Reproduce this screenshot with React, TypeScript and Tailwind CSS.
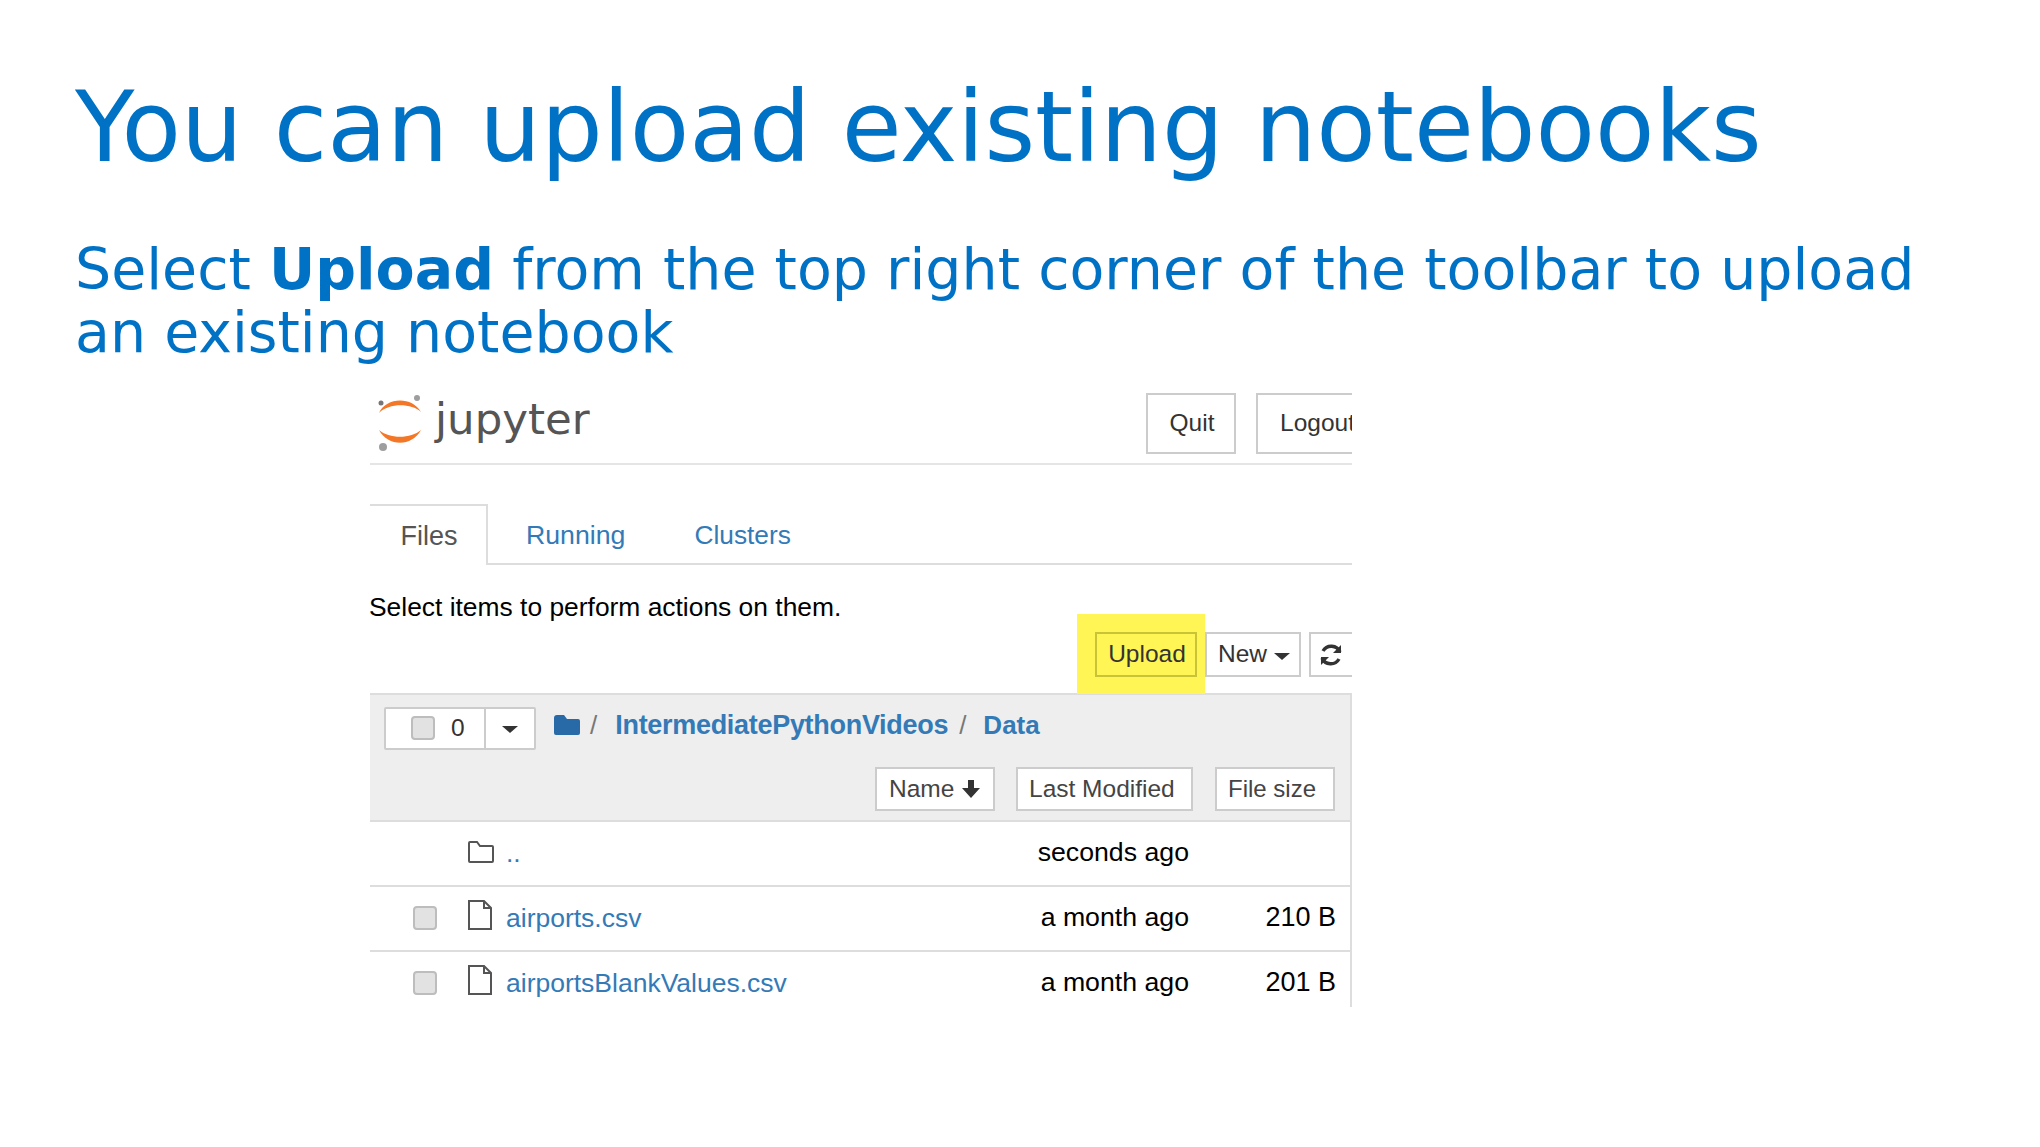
const sans = "font-['Liberation_Sans',Arial,sans-serif]";

function JupyterLogo() {
  return (
    <svg width="46" height="58" viewBox="0 0 46 58" className="shrink-0">
      <path d="M2 19 C9 3 35 2 44 18 C34 9 12 9 2 19 Z" fill="#f37726" />
      <path d="M2 36 C11 53 35 53 44 36 C34 45 12 45 2 36 Z" fill="#f37726" />
      <circle cx="40" cy="4" r="3" fill="#9e9e9e" />
      <circle cx="4" cy="9" r="2.5" fill="#767677" />
      <circle cx="6" cy="53" r="4" fill="#9e9e9e" />
    </svg>
  );
}

function Check() {
  return <span className="block w-[24px] h-[24px] rounded-[4px] border-2 border-[#bdbdbd] bg-[#e2e2e2]" />;
}

function HeaderBtn({ label, className }: { label: string; className: string }) {
  return (
    <div className={`h-[61px] border-2 border-[#ccc] flex items-center text-[24.5px] text-[#333] overflow-hidden ${className}`}>
      {label}
    </div>
  );
}

function SortBtn({ children, className }: { children: React.ReactNode; className: string }) {
  return (
    <div className={`h-[44px] bg-white border-2 border-[#ccc] flex items-center text-[#444] ${className}`}>
      {children}
    </div>
  );
}

function FileIcon() {
  return (
    <svg width="26" height="30" viewBox="0 0 26 30" fill="none" stroke="#555" strokeWidth="2">
      <path d="M2 1 H17 L24 8 V29 H2 Z M17 1 V8 H24" />
    </svg>
  );
}

function FileRow({ name, size }: { name: string; size: string }) {
  return (
    <div className="h-[65px] border-t-2 border-[#ddd] flex items-center">
      <div className="w-[54px] ml-[43px] shrink-0 -mt-[1px]"><Check /></div>
      <div className="w-[39px] -mt-[7px] shrink-0"><FileIcon /></div>
      <span className="text-[26.5px] text-[#337ab7]">{name}</span>
      <span className="ml-auto text-[26.7px] text-black text-right -mt-[2px]">a month ago</span>
      <span className="text-[27px] text-black w-[146px] text-right pr-[14px] ml-[15px] -mt-[2px]">{size}</span>
    </div>
  );
}

export default function App() {
  return (
    <div className="w-[2040px] h-[1147px] bg-white overflow-hidden font-['DejaVu_Sans',sans-serif] text-[#0072c6]">
      <div className="pl-[75px] pt-[68px]">
        <h1 className="text-[97.3px] leading-[120px] font-normal">You can upload existing notebooks</h1>
        <p className="mt-[50px] text-[57px] leading-[63px] w-[1850px]">
          Select <b className="font-bold">Upload</b> from the top right corner of the toolbar to upload an existing notebook
        </p>
      </div>

      <div className={`ml-[370px] mt-[28px] w-[982px] ${sans}`}>
        <div className="h-[71px] flex items-center border-b-2 border-[#e5e5e5] box-content">
          <div className="flex items-center ml-[7px] -mt-[10px]">
            <JupyterLogo />
            <span className="ml-[12px] text-[43.5px] leading-[50px] -mt-[8px] text-[#555] font-['DejaVu_Sans',sans-serif]">jupyter</span>
          </div>
          <div className="ml-auto flex gap-[20px] -mt-[9px] overflow-hidden">
            <HeaderBtn label="Quit" className="w-[90px] justify-center pl-[2px]" />
            <HeaderBtn label="Logout" className="w-[96px] pl-[22px] border-r-0" />
          </div>
        </div>

        <div className="mt-[39px] h-[59px] flex border-b-2 border-[#ddd] box-content">
          <div className="w-[118px] h-[61px] border-t-2 border-r-2 border-[#ddd] bg-white flex items-center justify-center text-[27px] text-[#555] pt-[2px] pl-[2px]">Files</div>
          <div className="flex items-center ml-[38px] text-[26.7px] text-[#337ab7] pt-[4px]">Running</div>
          <div className="flex items-center ml-[69px] text-[26.3px] text-[#337ab7] pt-[4px]">Clusters</div>
        </div>

        <div className="mt-[27px] -mb-[8px] leading-[30px] -ml-[1px] text-[26.4px] text-black">Select items to perform actions on them.</div>

        <div className="h-[79px] flex justify-end items-start">
          <div className="h-[80px] w-[128px] bg-[#fff555] pt-[18px] pl-[18px]">
            <div className="h-[45px] w-[102px] border-2 border-[#c9c437] flex items-center justify-center text-[24.5px] text-[#333] pl-[2px]">Upload</div>
          </div>
          <div className="h-[45px] w-[96px] mt-[18px] border-2 border-[#ccc] flex items-center pl-[11px] text-[24.5px] text-[#333]">
            New
            <span className="ml-[7px] mt-[3px] w-0 h-0 border-x-[8px] border-x-transparent border-t-[7px] border-t-[#333]" />
          </div>
          <div className="h-[45px] w-[43px] ml-[8px] mt-[18px] border-2 border-r-0 border-[#ccc] flex items-center pl-[8px]">
            <svg width="24" height="24" viewBox="0 0 24 24" fill="none" stroke="#333" strokeWidth="3.4">
              <path d="M21 9 A9.5 9.5 0 0 0 4 8 M3 15 A9.5 9.5 0 0 0 20 16" />
              <path d="M22 2 V10 H14 Z M2 22 V14 H10 Z" fill="#333" stroke="none" />
            </svg>
          </div>
        </div>

        <div className="h-[314px] overflow-hidden border-r-2 border-[#ddd]">
          <div className="h-[129px] bg-[#eee] border-t-2 border-b-2 border-[#ddd]">
            <div className="flex items-center pt-[12px] pl-[14px]">
              <div className="h-[43px] w-[152px] bg-white border-2 border-[#ccc] rounded-[2px] flex">
                <div className="w-[100px] border-r-2 border-[#ccc] flex items-center pl-[25px] -mt-[1px]">
                  <Check />
                  <span className="ml-[16px] text-[24.5px] text-[#333]">0</span>
                </div>
                <div className="flex-1 flex items-center justify-center">
                  <span className="w-0 h-0 border-x-[8px] border-x-transparent border-t-[7px] border-t-[#333] mt-[2px]" />
                </div>
              </div>
              <svg width="26" height="20" viewBox="0 0 26 20" className="ml-[18px] -mt-[8px]" fill="#286aa8">
                <path d="M0 3 Q0 0 3 0 H10 L13 4 H24 Q26 4 26 6 V18 Q26 20 24 20 H2 Q0 20 0 18 Z" />
              </svg>
              <span className="ml-[10px] -mt-[6px] text-[26px] text-[#777]">/</span>
              <span className="ml-[18px] -mt-[6px] text-[27px] text-[#337ab7] font-bold tracking-[-0.3px]">IntermediatePythonVideos</span>
              <span className="ml-[11px] -mt-[6px] text-[26px] text-[#777]">/</span>
              <span className="ml-[17px] -mt-[6px] text-[26px] text-[#337ab7] font-bold">Data</span>
            </div>
            <div className="flex justify-end mt-[17px] pr-[15px]">
              <SortBtn className="w-[120px] pl-[12px] gap-[6px] text-[24.5px]">
                Name
                <svg width="22" height="22" viewBox="0 0 22 22" fill="#333">
                  <path d="M8 2 H14 V10 H20 L11 20 L2 10 H8 Z" />
                </svg>
              </SortBtn>
              <SortBtn className="w-[177px] ml-[21px] pl-[11px] text-[24.5px]">Last Modified</SortBtn>
              <SortBtn className="w-[120px] ml-[22px] pl-[11px] text-[24px]">File size</SortBtn>
            </div>
          </div>

          <div className="h-[63px] flex items-center">
            <div className="ml-[97px] w-[39px] -mt-[3px]">
              <svg width="28" height="24" viewBox="0 0 28 24" fill="none" stroke="#555" strokeWidth="2">
                <path d="M2 3 Q2 2 3 2 H10 L13 6 H25 Q26 6 26 7 V21 Q26 22 25 22 H3 Q2 22 2 21 Z" />
              </svg>
            </div>
            <span className="text-[26.5px] text-[#337ab7]">..</span>
            <span className="ml-auto text-[26.7px] text-black text-right mr-[161px] -mt-[2px]">seconds ago</span>
          </div>
          <FileRow name="airports.csv" size="210 B" />
          <FileRow name="airportsBlankValues.csv" size="201 B" />
        </div>
      </div>
    </div>
  );
}
